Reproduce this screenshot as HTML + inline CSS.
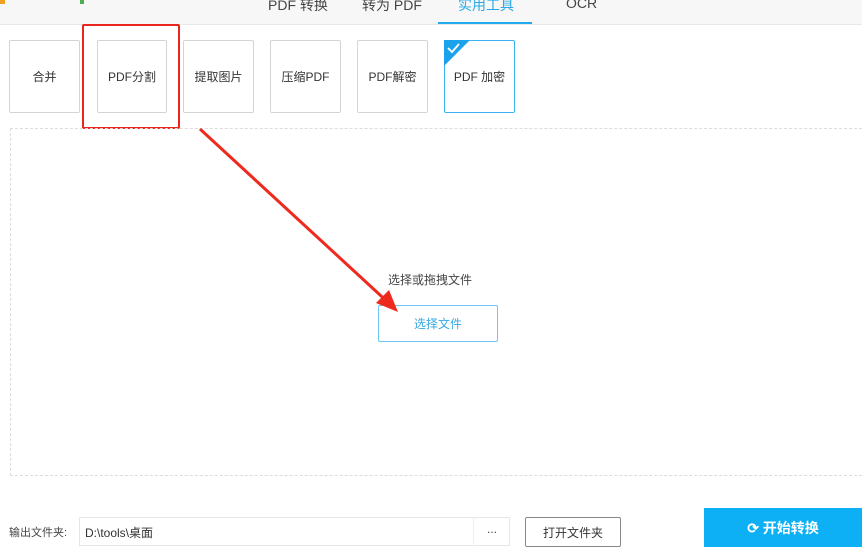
<!DOCTYPE html><html><head><meta charset="utf-8"><style>
body{margin:0;width:862px;height:556px;background:#fff;font-family:"Liberation Sans","Noto Sans CJK SC",sans-serif;font-size:12px;color:#333;position:relative;overflow:hidden}
.a{position:absolute}
.hdr{left:0;top:0;width:862px;height:24px;background:#f7f7f7;border-bottom:1px solid #e8e8e8}
.tab{top:-5px;font-size:14px;color:#444}
.btn{top:40px;width:69px;height:73px;border:1px solid #d4d4d4;border-radius:2px;display:flex;align-items:center;justify-content:center;font-size:12px;color:#333;box-sizing:border-box}
</style></head><body>
<div class="a hdr"></div>
<div class="a" style="left:0;top:0;width:5px;height:4px;background:#f0a020"></div>
<div class="a" style="left:80px;top:0;width:4px;height:4px;background:#4caf50"></div>
<div class="a tab" style="left:268px">PDF 转换</div>
<div class="a tab" style="left:362px">转为 PDF</div>
<div class="a tab" style="left:399px;color:#2aa8e8;left:458px">实用工具</div>
<div class="a tab" style="left:566px">OCR</div>
<div class="a" style="left:438px;top:22px;width:94px;height:2px;background:#22aaee"></div>
<div class="a btn" style="left:9px;width:71px">合并</div>
<div class="a btn" style="left:97px;width:70px">PDF分割</div>
<div class="a btn" style="left:183px;width:71px">提取图片</div>
<div class="a btn" style="left:270px;width:71px">压缩PDF</div>
<div class="a btn" style="left:357px;width:71px">PDF解密</div>
<div class="a btn" style="left:444px;width:71px;border-color:#3ab4f0">PDF 加密</div>
<svg class="a" style="left:444px;top:40px" width="26" height="26"><polygon points="0,0 26,0 0,26" fill="#1aa3ec"/><path d="M4 8 L8 12 L15 4" stroke="#fff" stroke-width="1.8" fill="none"/></svg>
<div class="a" style="left:82px;top:24px;width:94px;height:101px;border:2px solid #e8261e;border-radius:2px"></div>
<div class="a" style="left:10px;top:128px;width:870px;height:346px;border:1px dashed #dcdcdc"></div>
<div class="a" style="left:388px;top:271px;font-size:12px;color:#444">选择或拖拽文件</div>
<div class="a" style="left:378px;top:305px;width:118px;height:35px;border:1px solid #6cc8f0;border-radius:2px;display:flex;align-items:center;justify-content:center;color:#3aa8e0">选择文件</div>
<svg class="a" style="left:0;top:0" width="862" height="556"><line x1="200" y1="129" x2="392" y2="306" stroke="#ee2a1e" stroke-width="3"/><polygon points="398,312 376,303 389,290" fill="#ee2a1e"/></svg>
<div class="a" style="left:9px;top:524px;font-size:11px;color:#444">输出文件夹:</div>
<div class="a" style="left:79px;top:517px;width:431px;height:29px;border:1px solid #e6e6e6;box-sizing:border-box"></div>
<div class="a" style="left:473px;top:517px;width:1px;height:29px;background:#eee"></div>
<div class="a" style="left:85px;top:524px;font-size:12px;color:#333">D:\tools\桌面</div>
<div class="a" style="left:487px;top:522px;color:#444">...</div>
<div class="a" style="left:525px;top:517px;width:96px;height:30px;border:1px solid #888;border-radius:2px;box-sizing:border-box;display:flex;align-items:center;justify-content:center;color:#333">打开文件夹</div>
<div class="a" style="left:704px;top:508px;width:158px;height:39px;background:#0eb0f5;display:flex;align-items:center;justify-content:center;color:#fff;font-size:14px;font-weight:bold">⟳ 开始转换</div>
</body></html>
